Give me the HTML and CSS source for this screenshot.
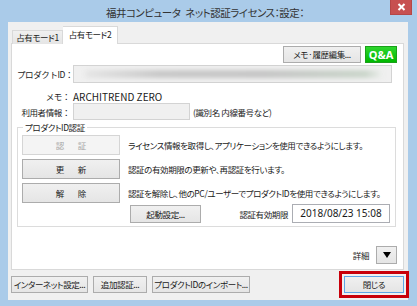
FILE: index.html
```html
<!DOCTYPE html>
<html lang="ja">
<head>
  <meta charset="UTF-8">
  <meta name="viewport" content="width=device-width, initial-scale=1.0">
  <title>福井コンピュータ ネット認証ライセンス：設定：</title>
  <link rel="stylesheet" href="styles.css">
</head>
<body>

<div class="window">
  <div class="titlebar">
    <div class="title">福井コンピュータ ネット認証ライセンス：設定：</div>
    <button class="btn-close" title="閉じる">
      <svg width="9" height="8" viewBox="0 0 9 8"><path d="M1.5 1 L7.5 7 M7.5 1 L1.5 7" stroke="#fff" stroke-width="2"/></svg>
    </button>
  </div>

  <div class="client">
    <div class="tabs">
      <div class="tab">占有モード1</div>
      <div class="tab tab-active">占有モード2</div>
    </div>

    <div class="panel">
      <div class="top-row">
        <button class="btn btn-memo">メモ·履歴編集...</button>
        <button class="btn-qa">Q&amp;A</button>
      </div>

      <div class="form-grid">
        <div class="label">プロダクトID：</div>
        <div class="field field-id"><div class="blur"></div></div>

        <div class="label label-memo">メモ：</div>
        <div class="memo-value">ARCHITREND ZERO</div>

        <div class="label">利用者情報：</div>
        <div class="user-row">
          <div class="field field-user"></div>
          <span class="note">(識別名 内線番号など)</span>
        </div>
      </div>

      <fieldset class="group">
        <legend>プロダクトID認証</legend>
        <div class="auth-row">
          <button class="btn btn-auth" disabled>認　証</button>
          <span>ライセンス情報を取得し、アプリケーションを使用できるようにします。</span>
        </div>
        <div class="auth-row">
          <button class="btn btn-auth">更　新</button>
          <span>認証の有効期限の更新や、再認証を行います。</span>
        </div>
        <div class="auth-row">
          <button class="btn btn-auth">解　除</button>
          <span>認証を解除し、他のPC/ユーザーでプロダクトIDを使用できるようにします。</span>
        </div>
        <div class="expire-row">
          <button class="btn btn-boot">起動設定...</button>
          <span class="expire-label">認証有効期限</span>
          <div class="field field-date">2018/08/23 15:08</div>
        </div>
      </fieldset>

      <div class="detail-row">
        <span>詳細</span>
        <button class="btn btn-detail">
          <svg width="8" height="6" viewBox="0 0 8 6"><path d="M0 0 H8 L4 6 Z" fill="#000"/></svg>
        </button>
      </div>
    </div>

    <div class="bottom-row">
      <button class="btn btn-net">インターネット設定...</button>
      <button class="btn btn-add">追加認証...</button>
      <button class="btn btn-import">プロダクトIDのインポート...</button>
      <button class="btn btn-ok">閉じる</button>
    </div>
  </div>
</div>

</body>
</html>
```

FILE: styles.css
```css
body {
  margin: 0;
  font-family: "Noto Sans CJK JP", sans-serif;
  font-feature-settings: "palt";
  font-size: 8.5px;
  letter-spacing: -0.4px;
  color: #1a1a1a;
}
button {
  font-family: inherit;
  font-feature-settings: inherit;
  font-size: 8.5px;
  letter-spacing: inherit;
  color: #1a1a1a;
  padding: 0;
  white-space: nowrap;
  overflow: hidden;
}
.window {
  width: 417px;
  height: 306px;
  background-color: #aacbe9;
  display: flex;
  flex-direction: column;
}
.titlebar {
  height: 22px;
  display: flex;
  align-items: flex-start;
}
.title {
  flex: 1;
  text-align: center;
  font-size: 10.5px;
  letter-spacing: -0.5px;
  word-spacing: 3px;
  line-height: 26px;
  color: #333;
  padding-left: 20px;
}
.btn-close {
  width: 22px;
  height: 15px;
  margin-right: 5px;
  background-color: #c75050;
  border: 1px solid #b54646;
  border-top: none;
  display: flex;
  align-items: center;
  justify-content: center;
}
.client {
  margin: 0 9px 6px 8px;
  flex: 1;
  min-height: 0;
  background-color: #f0f0f0;
  padding: 4px 4px 7px 3px;
  display: flex;
  flex-direction: column;
}
.tabs {
  display: flex;
  align-items: flex-end;
  height: 18px;
  flex-shrink: 0;
  padding-left: 1px;
  margin-bottom: -1px;
  position: relative;
  z-index: 1;
}
.tab {
  width: 51px;
  height: 14px;
  box-sizing: border-box;
  border: 1px solid #d9d9d9;
  border-bottom: none;
  background: linear-gradient(#f0f0f0, #e5e5e5);
  text-align: center;
  line-height: 13px;
  white-space: nowrap;
}
.tab-active {
  width: 55px;
  height: 18px;
  background: #fff;
  border-left: none;
  line-height: 15px;
}
.panel {
  flex: 1;
  min-height: 0;
  background-color: #fff;
  border: 1px solid #d9d9d9;
  padding: 2px 7px 0 5px;
}
.top-row {
  display: flex;
  justify-content: flex-end;
  gap: 4px;
  margin-right: -1px;
}
.btn {
  background: linear-gradient(#f0f0f0, #e5e5e5);
  border: 1px solid #acacac;
  height: 17px;
  line-height: 15px;
}
.btn-memo {
  width: 78px;
}
.btn-qa {
  width: 32px;
  height: 17px;
  background: linear-gradient(#2ed62e, #00b800);
  border: 1px solid #1aa01a;
  color: #fff;
  font-family: "Noto Sans", sans-serif;
  font-weight: bold;
  font-size: 11px;
  letter-spacing: 0;
  line-height: 14px;
}
.form-grid {
  display: grid;
  grid-template-columns: 53px 1fr;
  column-gap: 3px;
  margin-top: 2px;
  align-items: center;
}
.label {
  text-align: right;
  white-space: nowrap;
  font-feature-settings: normal;
}
.field {
  box-sizing: border-box;
  border: 1px solid #d3d3d3;
  background-color: #f0f0f0;
}
.field-id {
  height: 18px;
  margin-right: 4px;
  padding: 4px 8px 4px 11px;
}
.blur {
  height: 8px;
  background: linear-gradient(90deg, #e6e6e6, #c9c9c9 25%, #c6c6c6 60%, #cbd6cb 94%, #eef0ee);
  filter: blur(2px);
}
.label-memo,
.memo-value {
  padding-top: 7px;
  line-height: 13px;
  align-self: start;
}
.memo-value {
  font-size: 10px;
  letter-spacing: 0;
}
.user-row {
  display: flex;
  align-items: center;
  gap: 3px;
}
.field-user {
  width: 117px;
  height: 17px;
}
.group {
  margin: 1px 0 0 0;
  border: 1px solid #dcdcdc;
  padding: 2px 5px 3px 4px;
}
.group legend {
  padding: 0 2px;
  margin-left: 1px;
  line-height: 12px;
}
.auth-row {
  display: flex;
  align-items: center;
  gap: 8px;
  margin-bottom: 4px;
  white-space: nowrap;
}
.btn-auth {
  width: 98px;
  height: 20px;
  line-height: 18px;
  letter-spacing: 2.5px;
  padding-left: 2.5px;
}
.btn-auth:disabled {
  background: #f4f4f4;
  border-color: #d5d5d5;
  color: #a8a8a8;
}
.expire-row {
  display: flex;
  align-items: center;
  margin-top: -3px;
  padding-left: 108px;
}
.btn-boot {
  width: 71px;
  height: 18px;
  line-height: 16px;
}
.expire-label {
  margin-left: auto;
  margin-right: 4px;
}
.field-date {
  width: 98px;
  height: 19px;
  background-color: #fff;
  border-color: #abadb3;
  text-align: center;
  line-height: 17px;
  font-family: "Noto Sans", sans-serif;
  font-size: 10px;
  letter-spacing: 0;
}
.detail-row {
  display: flex;
  justify-content: flex-end;
  align-items: center;
  gap: 7px;
  margin-top: 19px;
  margin-right: -1px;
}
.btn-detail {
  width: 21px;
  height: 18px;
  display: flex;
  align-items: center;
  justify-content: center;
}
.bottom-row {
  display: flex;
  gap: 5px;
  margin-top: 6px;
  flex-shrink: 0;
}
.btn-net {
  width: 77px;
}
.btn-add {
  width: 54px;
}
.btn-import {
  width: 98px;
}
.btn-ok {
  margin-left: auto;
  width: 60px;
  border-color: #5ea6e6;
  outline: 3px solid #c8000a;
  outline-offset: 2px;
  overflow: visible;
}
```
